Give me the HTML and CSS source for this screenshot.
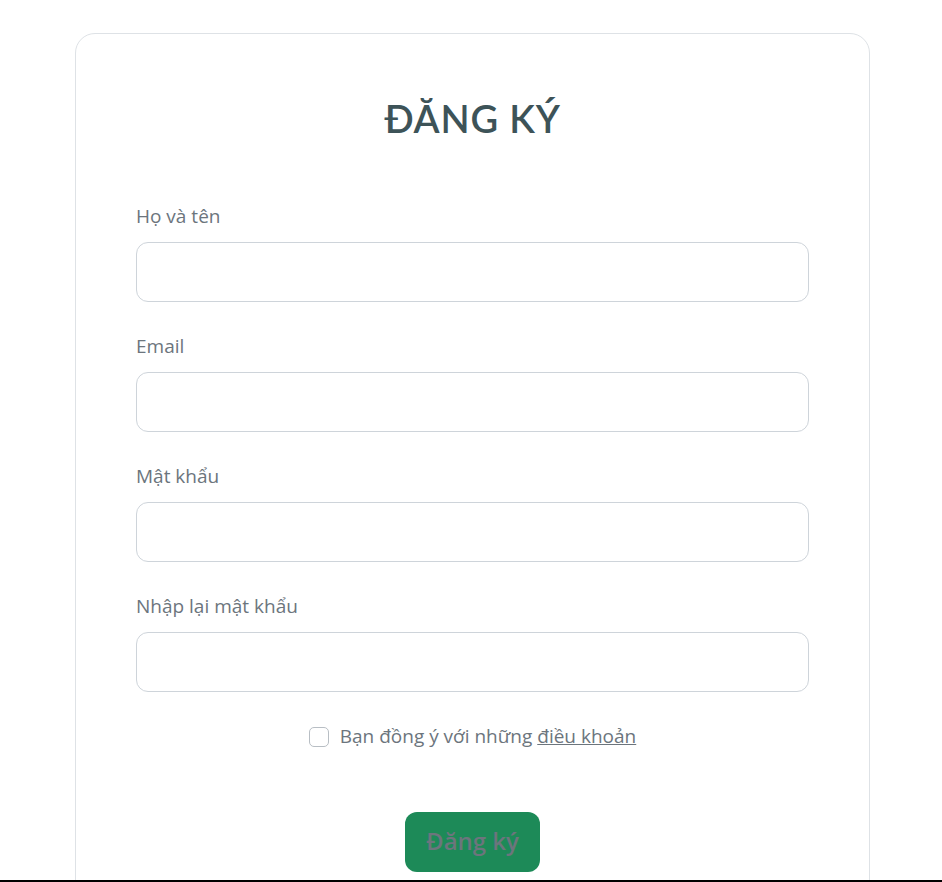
FILE: index.html
```html
<!DOCTYPE html>
<html lang="vi">
<head>
<meta charset="utf-8">
<title>Đăng ký</title>
<link rel="stylesheet" href="styles.css">
</head>
<body>
<main class="page">
  <section class="card">
    <h1 class="title">ĐĂNG KÝ</h1>
    <form class="form">
      <div class="group">
        <label class="label" for="name">Họ và tên</label>
        <input class="input" id="name" type="text">
      </div>
      <div class="group">
        <label class="label" for="email">Email</label>
        <input class="input" id="email" type="email">
      </div>
      <div class="group">
        <label class="label" for="pw">Mật khẩu</label>
        <input class="input" id="pw" type="password">
      </div>
      <div class="group">
        <label class="label" for="pw2">Nhập lại mật khẩu</label>
        <input class="input" id="pw2" type="password">
      </div>
      <div class="agree">
        <input class="check" type="checkbox" id="agree">
        <label for="agree">Bạn đồng ý với những <a class="link" href="#">điều khoản</a></label>
      </div>
      <div class="actions">
        <button class="btn" type="button">Đăng ký</button>
      </div>
    </form>
  </section>
</main>
<div class="footer-line"></div>
</body>
</html>
```
FILE: styles.css
```css
* { box-sizing: border-box; }
html, body { margin: 0; padding: 0; }
body {
  background: #fff;
  font-family: "Open Sans", "Noto Sans", sans-serif;
  color: #6c757d;
  height: 882px;
  overflow: hidden;
  display: flex;
  flex-direction: column;
}
.page {
  flex: 1;
  overflow: hidden;
  padding: 33px 72px 0 75px;
}
.card {
  border: 1px solid #dee2e6;
  border-radius: 20px;
  padding: 56px 60px 60px 60px;
  height: 900px;
}
.title {
  margin: 0;
  text-align: center;
  font-family: "Lato", sans-serif;
  font-size: 38px;
  line-height: 56px;
  font-weight: 600;
  color: #3d5358;
  letter-spacing: 0.8px;
}
.form {
  margin-top: 57px;
}
.group {
  margin-bottom: 31px;
}
.label {
  display: block;
  font-size: 19px;
  line-height: 27px;
  color: #6c757d;
  margin-bottom: 12px;
}
.input {
  display: block;
  width: 100%;
  height: 60px;
  border: 1px solid #ced4da;
  border-radius: 12px;
  background: #fff;
  font: inherit;
  padding: 0 16px;
}
.agree {
  display: flex;
  justify-content: center;
  align-items: center;
  gap: 11px;
  font-size: 19px;
  line-height: 27px;
  color: #6c757d;
  margin-top: 31px;
}
.check {
  appearance: none;
  width: 20px;
  height: 20px;
  margin: 0;
  border: 1px solid #b8bec4;
  border-radius: 5px;
  background: #fff;
}
.link {
  color: #6c757d;
  text-decoration: underline;
}
.actions {
  display: flex;
  justify-content: center;
  margin-top: 62px;
}
.btn {
  width: 135px;
  height: 60px;
  border: none;
  border-radius: 12px;
  background: #1d8a58;
  color: #6c757d;
  font-family: inherit;
  font-size: 24px;
  font-weight: 600;
  padding: 0 0 4px;
}
.footer-line {
  height: 2px;
  background: #000;
  flex: none;
}
```
